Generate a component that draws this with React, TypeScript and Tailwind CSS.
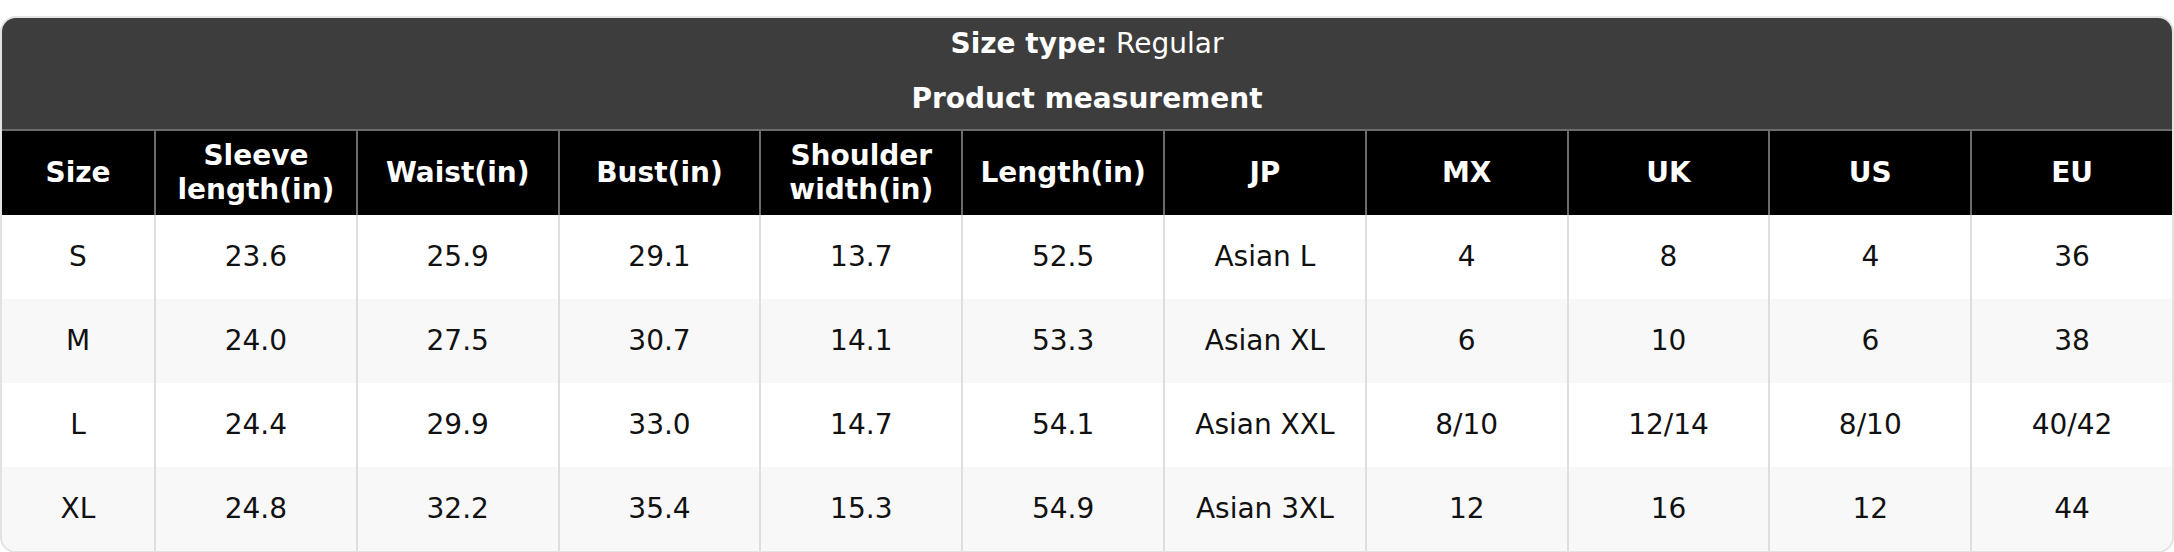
import React from "react";

const columns = [
  ["Size"],
  ["Sleeve", "length(in)"],
  ["Waist(in)"],
  ["Bust(in)"],
  ["Shoulder", "width(in)"],
  ["Length(in)"],
  ["JP"],
  ["MX"],
  ["UK"],
  ["US"],
  ["EU"],
];

const rows = [
  ["S", "23.6", "25.9", "29.1", "13.7", "52.5", "Asian L", "4", "8", "4", "36"],
  ["M", "24.0", "27.5", "30.7", "14.1", "53.3", "Asian XL", "6", "10", "6", "38"],
  ["L", "24.4", "29.9", "33.0", "14.7", "54.1", "Asian XXL", "8/10", "12/14", "8/10", "40/42"],
  ["XL", "24.8", "32.2", "35.4", "15.3", "54.9", "Asian 3XL", "12", "16", "12", "44"],
];

export default function App() {
  return (
    <div className="min-h-screen bg-white pt-[16px] font-['DejaVu_Sans',sans-serif] text-[28px] leading-[34px]">
      <div className="w-full overflow-hidden rounded-[16px] border-2 border-[#e2e2e2]">
        {/* Title block */}
        <div className="flex flex-col items-center gap-[21px] bg-[#3d3d3d] pt-[9px] pb-[13px] text-white">
          <div className="h-[34px]">
            <span className="font-bold">Size type:</span> Regular
          </div>
          <div className="h-[34px] font-bold">Product measurement</div>
        </div>

        {/* Header row */}
        <div className="grid grid-cols-[152px_repeat(10,1fr)] border-t-2 border-[#6b6b6b] bg-black text-white">
          {columns.map((lines, i) => (
            <div
              key={i}
              className={`flex h-[84px] flex-col items-center justify-center text-center font-bold ${
                i > 0 ? "border-l-2 border-[#6b6b6b]" : ""
              }`}
            >
              {lines.map((l) => (
                <span key={l}>{l}</span>
              ))}
            </div>
          ))}
        </div>

        {/* Body rows */}
        {rows.map((row, r) => (
          <div
            key={r}
            className={`grid grid-cols-[152px_repeat(10,1fr)] text-[#111] ${
              r % 2 === 1 ? "bg-[#f8f8f8]" : "bg-white"
            }`}
          >
            {row.map((cell, i) => (
              <div
                key={i}
                className={`flex h-[84px] items-center justify-center ${
                  i > 0 ? "border-l-2 border-[#dedede]" : ""
                }`}
              >
                {cell}
              </div>
            ))}
          </div>
        ))}
      </div>
    </div>
  );
}
